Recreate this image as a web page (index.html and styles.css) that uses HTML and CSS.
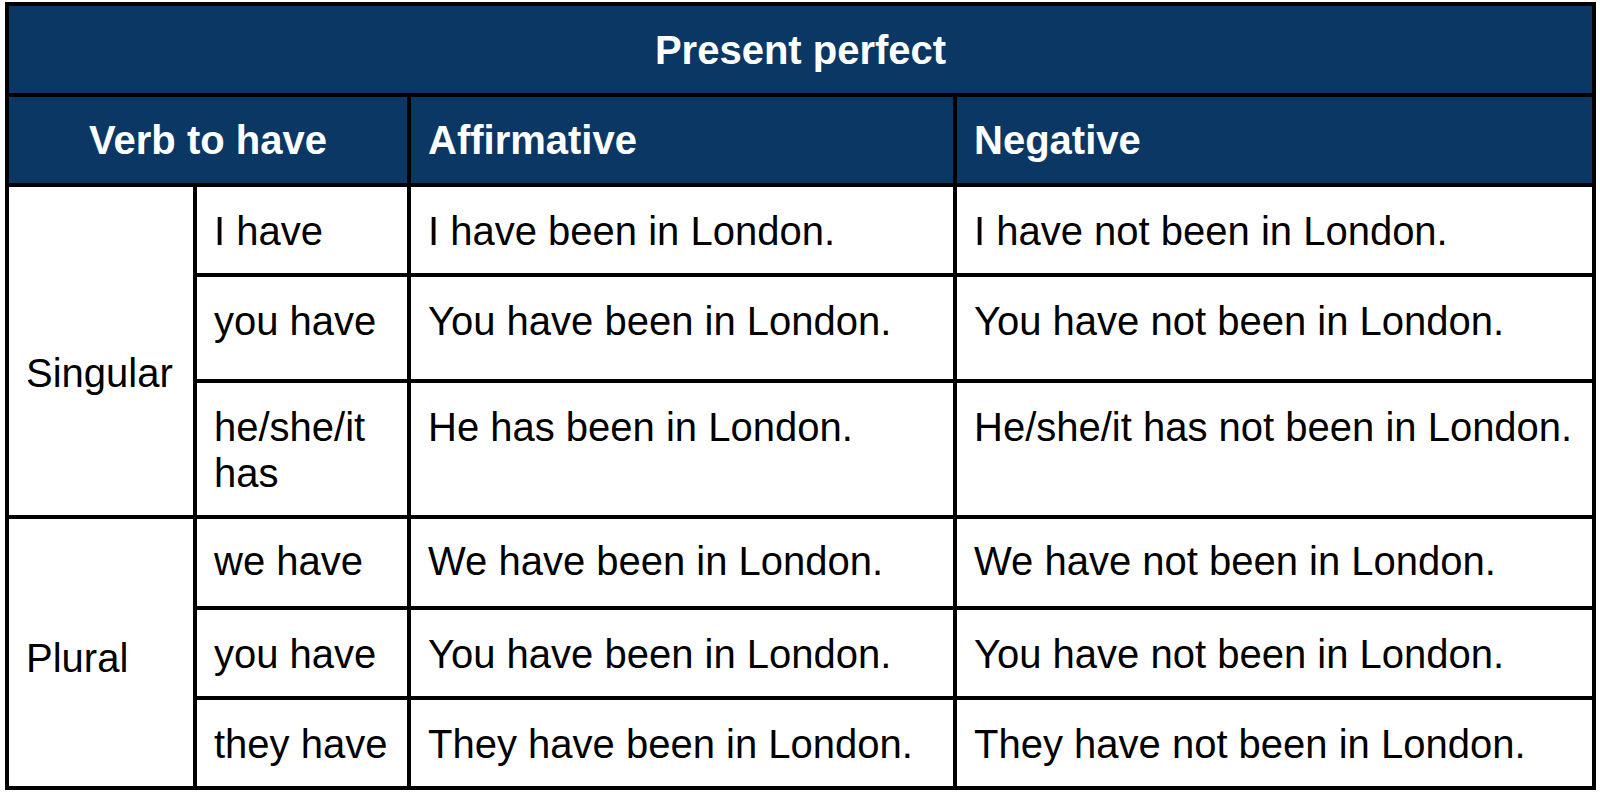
FILE: index.html
```html
<!DOCTYPE html>
<html lang="en">
<head>
<meta charset="utf-8">
<title>Present perfect</title>
<link rel="stylesheet" href="styles.css">
</head>
<body>
<table class="grammar">
  <colgroup>
    <col class="c-num">
    <col class="c-verb">
    <col class="c-aff">
    <col class="c-neg">
  </colgroup>
  <thead>
    <tr class="row-title">
      <th colspan="4" class="title">Present perfect</th>
    </tr>
    <tr class="row-head">
      <th colspan="2" class="head center">Verb to have</th>
      <th class="head">Affirmative</th>
      <th class="head">Negative</th>
    </tr>
  </thead>
  <tbody>
    <tr class="r1">
      <td rowspan="3" class="group singular">Singular</td>
      <td class="verb">I have</td>
      <td class="sent">I have been in London.</td>
      <td class="sent">I have not been in London.</td>
    </tr>
    <tr class="r2">
      <td class="verb">you have</td>
      <td class="sent">You have been in London.</td>
      <td class="sent">You have not been in London.</td>
    </tr>
    <tr class="r3">
      <td class="verb wrap">he/she/it has</td>
      <td class="sent">He has been in London.</td>
      <td class="sent">He/she/it has not been in London.</td>
    </tr>
    <tr class="r4">
      <td rowspan="3" class="group plural">Plural</td>
      <td class="verb">we have</td>
      <td class="sent">We have been in London.</td>
      <td class="sent">We have not been in London.</td>
    </tr>
    <tr class="r5">
      <td class="verb">you have</td>
      <td class="sent">You have been in London.</td>
      <td class="sent">You have not been in London.</td>
    </tr>
    <tr class="r6">
      <td class="verb">they have</td>
      <td class="sent">They have been in London.</td>
      <td class="sent">They have not been in London.</td>
    </tr>
  </tbody>
</table>
</body>
</html>
```
FILE: styles.css
```css
html, body {
  margin: 0;
  padding: 0;
  background: #ffffff;
}

body {
  font-family: "Liberation Sans", Arial, sans-serif;
  color: #000000;
}

.grammar {
  margin: 2px 0 0 5px;
  width: 1591px;
  table-layout: fixed;
  border-collapse: separate;
  border-spacing: 0;
  border-top: 4px solid #000;
  border-left: 4px solid #000;
  font-size: 40px;
  line-height: 46px;
}

.c-num { width: 188px; }
.c-verb { width: 214px; }
.c-aff { width: 546px; }
.c-neg { width: 639px; }

.grammar th,
.grammar td {
  box-sizing: border-box;
  border-right: 4px solid #000;
  border-bottom: 4px solid #000;
  padding: 21px 0 19px 17px;
  text-align: left;
  vertical-align: top;
  white-space: nowrap;
}

.grammar th {
  background: #0b3764;
  color: #ffffff;
  font-weight: bold;
  padding-top: 20px;
  padding-bottom: 20px;
}

.title {
  text-align: center !important;
  padding: 21px 0 20px 0 !important;
}

.center {
  text-align: center !important;
  padding-left: 0 !important;
}

.verb {
  padding-right: 4px !important;
}

.wrap {
  white-space: normal !important;
}

.r2 td {
  padding-bottom: 35px;
}

.r4 td {
  padding-top: 19px;
  padding-bottom: 22px;
}

.grammar td.group {
  vertical-align: top;
  padding-bottom: 0;
}

.grammar td.singular {
  padding-top: 163px;
}

.grammar td.plural {
  padding-top: 116px;
}
```
